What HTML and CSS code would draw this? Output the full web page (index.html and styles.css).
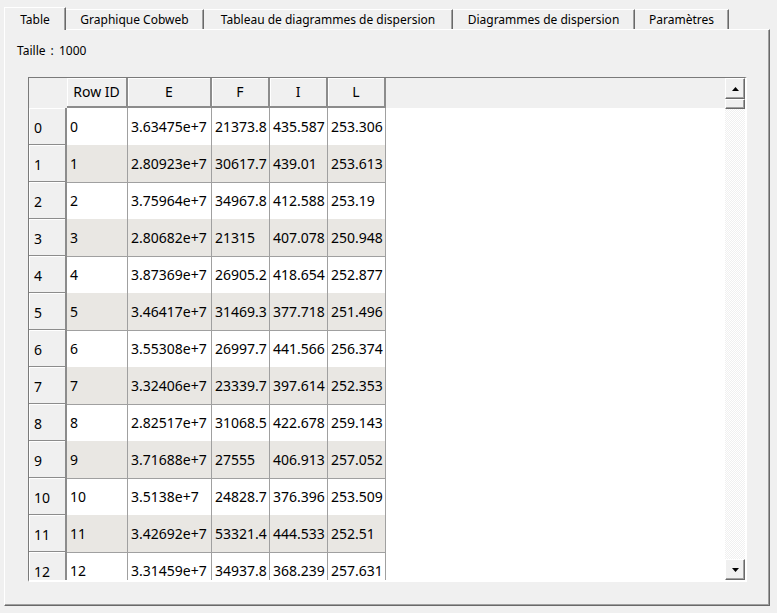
FILE: index.html
```html
<!DOCTYPE html>
<html lang="fr">
<head>
<meta charset="utf-8">
<title>Table</title>
<link rel="stylesheet" href="styles.css">
</head>
<body>
<div class="tabs">
  <div class="tab tab-active w1">Table</div>
  <div class="tab w2">Graphique Cobweb</div>
  <div class="tab w3">Tableau de diagrammes de dispersion</div>
  <div class="tab w4">Diagrammes de dispersion</div>
  <div class="tab w5">Paramètres</div>
</div>
<div class="panel">
  <div class="size">Taille : 1000</div>
  <div class="frame">
    <div class="grid">
      <div class="row head">
        <div class="corner"></div>
        <div class="hcell">Row ID</div>
        <div class="hcell">E</div>
        <div class="hcell">F</div>
        <div class="hcell">I</div>
        <div class="hcell">L</div>
        <div class="hfill"></div>
      </div>
      <div class="row"><div class="rh">0</div><div class="c">0</div><div class="c">3.63475e+7</div><div class="c">21373.8</div><div class="c">435.587</div><div class="c">253.306</div><div class="fill"></div></div>
      <div class="row alt"><div class="rh">1</div><div class="c">1</div><div class="c">2.80923e+7</div><div class="c">30617.7</div><div class="c">439.01</div><div class="c">253.613</div><div class="fill"></div></div>
      <div class="row"><div class="rh">2</div><div class="c">2</div><div class="c">3.75964e+7</div><div class="c">34967.8</div><div class="c">412.588</div><div class="c">253.19</div><div class="fill"></div></div>
      <div class="row alt"><div class="rh">3</div><div class="c">3</div><div class="c">2.80682e+7</div><div class="c">21315</div><div class="c">407.078</div><div class="c">250.948</div><div class="fill"></div></div>
      <div class="row"><div class="rh">4</div><div class="c">4</div><div class="c">3.87369e+7</div><div class="c">26905.2</div><div class="c">418.654</div><div class="c">252.877</div><div class="fill"></div></div>
      <div class="row alt"><div class="rh">5</div><div class="c">5</div><div class="c">3.46417e+7</div><div class="c">31469.3</div><div class="c">377.718</div><div class="c">251.496</div><div class="fill"></div></div>
      <div class="row"><div class="rh">6</div><div class="c">6</div><div class="c">3.55308e+7</div><div class="c">26997.7</div><div class="c">441.566</div><div class="c">256.374</div><div class="fill"></div></div>
      <div class="row alt"><div class="rh">7</div><div class="c">7</div><div class="c">3.32406e+7</div><div class="c">23339.7</div><div class="c">397.614</div><div class="c">252.353</div><div class="fill"></div></div>
      <div class="row"><div class="rh">8</div><div class="c">8</div><div class="c">2.82517e+7</div><div class="c">31068.5</div><div class="c">422.678</div><div class="c">259.143</div><div class="fill"></div></div>
      <div class="row alt"><div class="rh">9</div><div class="c">9</div><div class="c">3.71688e+7</div><div class="c">27555</div><div class="c">406.913</div><div class="c">257.052</div><div class="fill"></div></div>
      <div class="row"><div class="rh">10</div><div class="c">10</div><div class="c">3.5138e+7</div><div class="c">24828.7</div><div class="c">376.396</div><div class="c">253.509</div><div class="fill"></div></div>
      <div class="row alt"><div class="rh">11</div><div class="c">11</div><div class="c">3.42692e+7</div><div class="c">53321.4</div><div class="c">444.533</div><div class="c">252.51</div><div class="fill"></div></div>
      <div class="row"><div class="rh">12</div><div class="c">12</div><div class="c">3.31459e+7</div><div class="c">34937.8</div><div class="c">368.239</div><div class="c">257.631</div><div class="fill"></div></div>
    </div>
    <div class="sbar">
      <div class="sbtn"><svg width="7" height="4" viewBox="0 0 7 4"><path d="M3.5 0 L7 4 L0 4 Z" fill="#000"/></svg></div>
      <div class="thumb"></div>
      <div class="track"></div>
      <div class="sbtn"><svg width="7" height="4" viewBox="0 0 7 4"><path d="M0 0 L7 0 L3.5 4 Z" fill="#000"/></svg></div>
    </div>
  </div>
</div>
</body>
</html>
```

FILE: styles.css
```css
* { box-sizing: border-box; }
html, body { margin: 0; padding: 0; }
body {
  background: #f0f0f0;
  font-family: "Noto Sans", "Open Sans", sans-serif;
  color: #000;
  width: 777px;
  height: 613px;
  overflow: hidden;
}

.tabs {
  display: flex;
  align-items: flex-end;
  height: 22px;
  margin: 7px 0 0 4px;
}
.tab {
  height: 20px;
  font-size: 12px;
  line-height: 16px;
  padding-top: 2px;
  text-align: center;
  white-space: nowrap;
  background: #f0f0f0;
  border-top: 1px solid #fff;
  border-left: 1px solid #fff;
  border-right: 1px solid #696969;
  box-shadow: inset -1px 0 0 #a0a0a0;
}
.tab-active {
  height: 23px;
  margin-bottom: -1px;
  padding-top: 4px;
  position: relative;
  z-index: 1;
}
.w1 { width: 62px; }
.w2 { width: 138px; border-left: none; }
.w3 { width: 249px; border-left: none; }
.w4 { width: 182px; border-left: none; }
.w5 { width: 94px; border-left: none; }

.panel {
  margin: 0 7px 0 4px;
  height: 577px;
  border-top: 1px solid #fff;
  border-left: 1px solid #fff;
  border-right: 1px solid #696969;
  border-bottom: 1px solid #696969;
  box-shadow: inset -1px -1px 0 #a0a0a0;
  padding: 13px 0 0 23px;
}
.size {
  font-size: 12px;
  line-height: 16px;
  word-spacing: 2px;
  margin-left: -11px;
}

.frame {
  margin-top: 18px;
  width: 719px;
  height: 505px;
  display: flex;
  border-top: 1px solid #7a7a7a;
  border-left: 1px solid #7a7a7a;
  border-right: 2px solid #fff;
  border-bottom: 2px solid #fff;
  background: #fff;
}
.grid {
  flex: 1;
  overflow: hidden;
  font-size: 14px;
}
.row {
  display: grid;
  grid-template-columns: 38px 61px 84px 58px 58px 58px 1fr;
  height: 37px;
}
.row.head { height: 30px; background: #f0f0f0; }

.corner {
  background: #f0f0f0;
}
.hcell {
  background: #f0f0f0;
  border-right: 2px solid #8c8c8c;
  border-bottom: 2px solid #8c8c8c;
  box-shadow: inset 1px 1px 0 #fff;
  text-align: center;
  line-height: 26px;
  padding-top: 1px;
}
.hfill { background: #f0f0f0; }

.rh {
  background: #f0f0f0;
  border-right: 2px solid #8c8c8c;
  border-bottom: 2px solid #8c8c8c;
  box-shadow: inset 1px 1px 0 #fff;
  padding: 3px 0 0 5px;
  line-height: 33px;
}
.c {
  border-right: 1px solid #a0a0a0;
  border-bottom: 1px solid #a0a0a0;
  padding: 1px 0 0 3px;
  line-height: 35px;
  white-space: nowrap;
  overflow: hidden;
}
.alt .c { background: #e9e7e3; }
.fill { background: #fff; }

.sbar {
  width: 20px;
  display: flex;
  flex-direction: column;
  background: #f0f0f0;
}
.sbtn, .thumb {
  background: #f0f0f0;
  border-top: 1px solid #fff;
  border-left: 1px solid #fff;
  border-right: 1px solid #696969;
  border-bottom: 1px solid #696969;
  box-shadow: inset -1px -1px 0 #a0a0a0;
}
.sbtn {
  height: 21px;
  display: flex;
  align-items: center;
  justify-content: center;
}
.sbtn svg { display: block; }
.thumb { height: 10px; }
.track {
  flex: 1;
  background: repeating-conic-gradient(#f0f0f0 0 25%, #fff 0 50%) 0 0 / 2px 2px;
}
```
